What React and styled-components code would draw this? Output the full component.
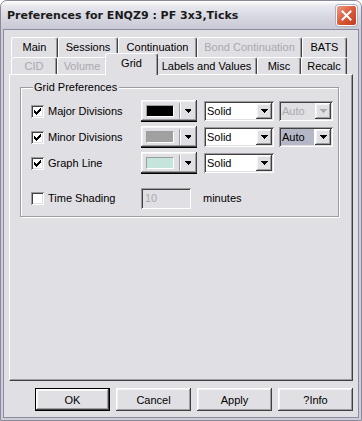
import React from "react";
import styled, { createGlobalStyle, css } from "styled-components";

//============ colours
const FACE = "#e0dfe3";
const SHADOW = "#9d9da1";
const DARK = "#404040";

const GlobalStyle = createGlobalStyle`
	html, body {
		margin: 0;
		padding: 0;
	}
	body {
		width: 362px;
		height: 421px;
		overflow: hidden;
		background: #ffffff;
		font-family: "Liberation Sans", Arial, sans-serif;
		font-size: 11px;
		color: #000;
	}
`;

//============ data
const tabsTop = [
	{ label: "Main", w: 47 },
	{ label: "Sessions", w: 60 },
	{ label: "Continuation", w: 79 },
	{ label: "Bond Continuation", w: 105, disabled: true },
	{ label: "BATS", w: 45 },
];

const tabsBottom = [
	{ label: "CID", w: 46, disabled: true },
	{ label: "Volume", w: 50, disabled: true },
	{ label: "Grid", w: 49, selected: true },
	{ label: "Labels and Values", w: 101 },
	{ label: "Misc", w: 44 },
	{ label: "Recalc", w: 46 },
];

const gridRows = [
	{ label: "Major Divisions", color: "#000000", auto: "disabled" },
	{ label: "Minor Divisions", color: "#a0a0a0", auto: "active" },
	{ label: "Graph Line", color: "#c4e4dc" },
];

const raised = css`
	box-shadow: inset -1px -1px ${DARK}, inset 1px 1px #ffffff,
		inset -2px -2px ${SHADOW}, inset 2px 2px #f4f3f6;
`;

const sunken = css`
	box-shadow: inset 1px 1px ${SHADOW}, inset -1px -1px #ffffff,
		inset 2px 2px ${DARK}, inset -2px -2px ${FACE};
`;

//============ icons
const Arrow = ({ disabled }) => (
	<svg width="7" height="4" viewBox="0 0 7 4" shapeRendering="crispEdges">
		<path
			d="M0 0h7v1H0z M1 1h5v1H1z M2 2h3v1H2z M3 3h1v1H3z"
			fill={disabled ? "#a8a8ae" : "#000"}
		/>
	</svg>
);

const Tick = () => (
	<svg width="7" height="7" viewBox="0 0 7 7" shapeRendering="crispEdges">
		<path
			d="M6 0h1v3H6z M5 1h1v3H5z M4 2h1v3H4z M3 3h1v3H3z M2 4h1v3H2z M1 3h1v3H1z M0 2h1v3H0z"
			fill="#000"
		/>
	</svg>
);

//============ components
const CheckBox = ({ checked }) => (
	<CheckBoxBox>{checked && <Tick />}</CheckBoxBox>
);

const ComboBox = ({ value, width, disabled, highlighted }) => (
	<Combo $w={width} $disabled={disabled}>
		<ComboText $disabled={disabled} $highlighted={highlighted}>
			{value}
		</ComboText>
		<ComboButton>
			<Arrow disabled={disabled} />
		</ComboButton>
	</Combo>
);

const ColorPicker = ({ color }) => (
	<ColorButton>
		<Swatch style={{ background: color }} />
		<Separator />
		<Arrow />
	</ColorButton>
);

const TabStrip = () => (
	<Tabs>
		<TabRow $h={20}>
			{tabsTop.map((t, i) => (
				<Tab key={i} $w={t.w} $disabled={t.disabled}>
					{t.label}
				</Tab>
			))}
		</TabRow>
		<TabRow $h={17}>
			{tabsBottom.map((t, i) => (
				<Tab
					key={i}
					$w={t.w}
					$disabled={t.disabled}
					$selected={t.selected}
				>
					{t.label}
				</Tab>
			))}
		</TabRow>
	</Tabs>
);

const App = () => {
	return (
		<>
			<GlobalStyle />
			<Window>
				<TitleBar>
					<Title>Preferences for ENQZ9 : PF 3x3,Ticks</Title>
					<CloseButton>
						<svg width="11" height="11" viewBox="0 0 11 11">
							<path
								d="M1.5 1.5 L9.5 9.5 M9.5 1.5 L1.5 9.5"
								stroke="#fff"
								strokeWidth="2"
								strokeLinecap="square"
							/>
						</svg>
					</CloseButton>
				</TitleBar>
				<Body>
					<TabStrip />
					<Panel>
						<Group>
							<Legend>Grid Preferences</Legend>
							<Rows>
								{gridRows.map((r, i) => (
									<Row key={i}>
										<LabelCell>
											<CheckBox checked />
											<Label>{r.label}</Label>
										</LabelCell>
										<ColorPicker color={r.color} />
										<ComboBox value="Solid" width={70} />
										{r.auto && (
											<ComboBox
												value="Auto"
												width={54}
												disabled={r.auto === "disabled"}
												highlighted={r.auto === "active"}
											/>
										)}
									</Row>
								))}
								<Row $spaced>
									<LabelCell>
										<CheckBox />
										<Label>Time Shading</Label>
									</LabelCell>
									<NumberField>10</NumberField>
									<Unit>minutes</Unit>
								</Row>
							</Rows>
						</Group>
					</Panel>
					<ButtonBar>
						<PushButton $default>OK</PushButton>
						<PushButton>Cancel</PushButton>
						<PushButton>Apply</PushButton>
						<PushButton>?Info</PushButton>
					</ButtonBar>
				</Body>
			</Window>
		</>
	);
};

export default App;

//============ styles
const Window = styled.div`
	width: 362px;
	height: 421px;
	box-sizing: border-box;
	display: flex;
	flex-direction: column;
	background: #cdcdd8;
	border: 1px solid #8a8a9c;
	border-radius: 7px 7px 0 0;
	overflow: hidden;
`;

const TitleBar = styled.div`
	height: 28px;
	flex-shrink: 0;
	display: flex;
	align-items: center;
	padding: 0 4px 0 6px;
	background: linear-gradient(
		to bottom,
		#ffffff 0%,
		#e8e8ef 18%,
		#d8d8e2 55%,
		#c9c9d5 100%
	);
`;

const Title = styled.div`
	font-family: "DejaVu Sans", Verdana, sans-serif;
	font-weight: bold;
	font-size: 11px;
	color: #1a1a1a;
	padding-top: 1px;
`;

const CloseButton = styled.div`
	margin-left: auto;
	width: 21px;
	height: 21px;
	box-sizing: border-box;
	display: flex;
	align-items: center;
	justify-content: center;
	border: 1px solid #ffffff;
	border-radius: 3px;
	background: linear-gradient(135deg, #eb9a84 0%, #db5a3a 50%, #c13c1c 100%);
	box-shadow: 0 0 0 1px #b0b0c0;
`;

const Body = styled.div`
	flex: 1;
	display: flex;
	flex-direction: column;
	margin: 0 2px 2px;
	padding: 7px 5px 6px 5px;
	background: ${FACE};
	border: 1px solid #8c8ca0;
`;

const Tabs = styled.div`
	display: flex;
	flex-direction: column;
	padding-left: 2px;
`;

const TabRow = styled.div`
	display: flex;
	height: ${(p) => p.$h}px;
`;

const Tab = styled.div`
	width: ${(p) => p.$w}px;
	box-sizing: border-box;
	display: flex;
	justify-content: center;
	align-items: center;
	padding-bottom: 1px;
	background: ${FACE};
	border-top: 1px solid #ffffff;
	border-left: 1px solid #ffffff;
	border-right: 1px solid ${DARK};
	border-radius: 3px 3px 0 0;
	box-shadow: inset -1px 0 ${SHADOW};
	color: ${(p) => (p.$disabled ? "#a9a9b0" : "#000")};
	white-space: nowrap;

	${(p) =>
		p.$selected &&
		css`
			position: relative;
			z-index: 2;
			width: ${p.$w + 4}px;
			margin: -4px -2px -1px;
			padding-bottom: 4px;
		`}
`;

const Panel = styled.div`
	flex: 1;
	box-sizing: border-box;
	padding: 6px 0 0 10px;
	background: ${FACE};
	border-top: 1px solid #ffffff;
	border-left: 1px solid #ffffff;
	border-right: 1px solid ${DARK};
	border-bottom: 1px solid ${DARK};
	box-shadow: inset -1px -1px ${SHADOW};
`;

const Group = styled.fieldset`
	width: 319px;
	box-sizing: border-box;
	margin: 0;
	padding: 6px 0 7px 10px;
	border: 1px solid ${SHADOW};
	box-shadow: inset 1px 1px #ffffff, 1px 1px #ffffff;
`;

const Legend = styled.legend`
	margin-left: 2px;
	padding: 0 2px 0 1px;
	line-height: 13px;
	background: ${FACE};
`;

const Rows = styled.div`
	display: flex;
	flex-direction: column;
	gap: 4px;
`;

const Row = styled.div`
	display: flex;
	align-items: center;
	height: 22px;
	margin-top: ${(p) => (p.$spaced ? 9 : 0)}px;
`;

const LabelCell = styled.div`
	width: 110px;
	display: flex;
	align-items: center;
`;

const Label = styled.span`
	margin-left: 4px;
	white-space: nowrap;
`;

const CheckBoxBox = styled.span`
	width: 13px;
	height: 13px;
	box-sizing: border-box;
	display: flex;
	align-items: center;
	justify-content: center;
	background: #ffffff;
	${sunken};
`;

const ColorButton = styled.div`
	width: 56px;
	height: 22px;
	box-sizing: border-box;
	display: flex;
	align-items: center;
	padding: 0 6px 0 5px;
	background: ${FACE};
	${raised};
	border-bottom: 1px solid #000;
	margin-right: 7px;
`;

const Swatch = styled.span`
	width: 30px;
	height: 12px;
	box-sizing: border-box;
	border: 1px solid;
	border-color: ${SHADOW} #ffffff #ffffff ${SHADOW};
`;

const Separator = styled.span`
	width: 1px;
	height: 16px;
	margin: 0 5px 0 5px;
	background: ${SHADOW};
	box-shadow: 1px 0 #ffffff;
`;

const Combo = styled.div`
	width: ${(p) => p.$w}px;
	height: 20px;
	box-sizing: border-box;
	display: flex;
	align-items: stretch;
	padding: 2px;
	margin-right: 5px;
	background: ${(p) => (p.$disabled ? FACE : "#ffffff")};
	${sunken};
`;

const ComboText = styled.div`
	flex: 1;
	display: flex;
	align-items: center;
	padding-left: 1px;
	margin-right: 1px;
	color: ${(p) => (p.$disabled ? "#a9a9b0" : "#000")};
	background: ${(p) => (p.$highlighted ? "#b6b7c6" : "transparent")};
`;

const ComboButton = styled.div`
	width: 16px;
	display: flex;
	align-items: center;
	justify-content: center;
	background: ${FACE};
	${raised};
`;

const NumberField = styled.div`
	width: 50px;
	height: 21px;
	box-sizing: border-box;
	display: flex;
	align-items: center;
	padding-left: 4px;
	color: #a9a9b0;
	background: ${FACE};
	${sunken};
`;

const Unit = styled.span`
	margin-left: 12px;
`;

const ButtonBar = styled.div`
	display: flex;
	justify-content: flex-end;
	gap: 6px;
	margin-top: 7px;
`;

const PushButton = styled.div`
	width: 75px;
	height: 23px;
	box-sizing: border-box;
	display: flex;
	align-items: center;
	justify-content: center;
	background: ${FACE};
	${raised};
	${(p) =>
		p.$default &&
		css`
			border: 1px solid #000;
		`}
`;
